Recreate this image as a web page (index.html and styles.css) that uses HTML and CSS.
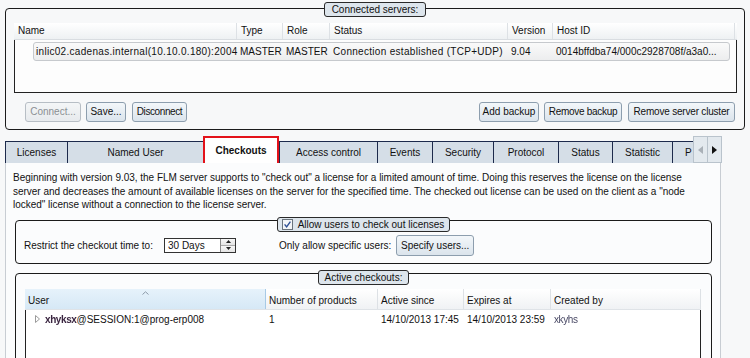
FILE: index.html
```html
<!DOCTYPE html>
<html>
<head>
<meta charset="utf-8">
<link rel="stylesheet" href="styles.css">
</head>
<body>
<section class="group servers">
  <div class="group-title title-servers">Connected servers:</div>
  <div class="srv-table">
    <div class="srv-head">
      <div class="th">Name</div>
      <div class="th">Type</div>
      <div class="th">Role</div>
      <div class="th">Status</div>
      <div class="th">Version</div>
      <div class="th">Host ID</div>
    </div>
    <div class="srv-body">
      <div class="srv-row">
        <div class="td td-wide">inlic02.cadenas.internal(10.10.0.180):2004</div>
        <div class="td">MASTER</div>
        <div class="td">MASTER</div>
        <div class="td td-wide">Connection established (TCP+UDP)</div>
        <div class="td">9.04</div>
        <div class="td">0014bffdba74/000c2928708f/a3a0...</div>
      </div>
    </div>
  </div>
  <div class="btn-row">
    <div class="btn-group">
      <div class="btn disabled b-connect">Connect...</div>
      <div class="btn b-save">Save...</div>
      <div class="btn b-disconnect">Disconnect</div>
    </div>
    <div class="btn-group btn-group-right">
      <div class="btn b-add">Add backup</div>
      <div class="btn b-remove">Remove backup</div>
      <div class="btn b-cluster">Remove server cluster</div>
    </div>
  </div>
</section>

<nav class="tabbar">
  <div class="tab w-licenses">Licenses</div>
  <div class="tab w-named">Named User</div>
  <div class="tab active w-checkouts">Checkouts</div>
  <div class="tab w-access">Access control</div>
  <div class="tab w-events">Events</div>
  <div class="tab w-security">Security</div>
  <div class="tab w-protocol">Protocol</div>
  <div class="tab w-status">Status</div>
  <div class="tab w-statistic">Statistic</div>
  <div class="tab w-partial"><span class="partial-label">P</span></div>
  <div class="scroll-btn">
    <svg width="5" height="8" viewBox="0 0 5 8"><path d="M5 0 L0 4 L5 8 Z" fill="#a9b0b7"/></svg>
  </div>
  <div class="scroll-btn">
    <svg width="5" height="8" viewBox="0 0 5 8"><path d="M0 0 L5 4 L0 8 Z" fill="#111"/></svg>
  </div>
</nav>

<main class="pane">
  <p class="intro">Beginning with version 9.03, the FLM server supports to "check out" a license for a limited amount of time. Doing this reserves the license on the license<br>server and decreases the amount of available licenses on the server for the specified time. The checked out license can be used on the client as a "node<br>locked" license without a connection to the license server.</p>

  <section class="group opts">
    <div class="group-title title-opts">
      <svg class="check" width="11" height="11" viewBox="0 0 11 11"><rect x="0.5" y="0.5" width="10" height="10" fill="#f3f5f7" stroke="#6a737c"/><path d="M2.6 5.4 L4.6 7.9 L8.4 2.6" fill="none" stroke="#2d4f94" stroke-width="1.4"/></svg>
      Allow users to check out licenses
    </div>
    <label class="lbl lbl-restrict">Restrict the checkout time to:</label>
    <div class="spin">
      <span class="spin-val">30 Days</span>
      <span class="spin-btns">
        <span class="spin-b"><svg width="5" height="3" viewBox="0 0 5 3"><path d="M0 3 L2.5 0 L5 3 Z" fill="#222"/></svg></span>
        <span class="spin-b"><svg width="5" height="3" viewBox="0 0 5 3"><path d="M0 0 L2.5 3 L5 0 Z" fill="#222"/></svg></span>
      </span>
    </div>
    <label class="lbl lbl-only">Only allow specific users:</label>
    <div class="btn btn-specify">Specify users...</div>
  </section>

  <section class="group checkouts">
    <div class="group-title title-checkouts">Active checkouts:</div>
    <div class="co-table">
      <div class="co-head">
        <div class="th th-sorted">
          <svg class="sort" width="7" height="4" viewBox="0 0 7 4"><path d="M0.5 3.5 L3.5 0.8 L6.5 3.5" fill="none" stroke="#8c9aa8" stroke-width="1"/></svg>
          User
        </div>
        <div class="th">Number of products</div>
        <div class="th">Active since</div>
        <div class="th">Expires at</div>
        <div class="th">Created by</div>
      </div>
      <div class="co-body">
        <div class="co-row">
          <div class="td td-user">
            <svg class="expander" width="5" height="8" viewBox="0 0 5 8"><path d="M0.5 0.5 L4.5 4 L0.5 7.5 Z" fill="none" stroke="#9a9a9a"/></svg>
            <span class="blur blur-user">xhyksx</span>@SESSION:1@prog-erp008
          </div>
          <div class="td">1</div>
          <div class="td">14/10/2013 17:45</div>
          <div class="td">14/10/2013 23:59</div>
          <div class="td"><span class="blur blur-created">xkyhs</span></div>
        </div>
      </div>
    </div>
  </section>
</main>
</body>
</html>
```

FILE: styles.css
```css
* { box-sizing: border-box; }
html, body { margin: 0; padding: 0; }
body {
  width: 750px;
  height: 358px;
  overflow: hidden;
  background: #f7f8f9;
  font-family: "Liberation Sans", Arial, sans-serif;
  font-size: 10px;
  color: #111;
}

/* group boxes */
.group {
  position: relative;
  border: 1px solid #1b1b1b;
  border-radius: 4px;
}
.group-title {
  position: absolute;
  left: 0;
  right: 0;
  margin: 0 auto;
  width: max-content;
  height: 15px;
  padding: 0 6px;
  line-height: 13px;
  background: #dde5ec;
  border: 1px solid #2a2a2a;
  border-radius: 3px;
  white-space: nowrap;
  display: flex;
  align-items: center;
  gap: 5px;
}
.title-servers { top: -7px; padding: 0 7px; }
.title-opts { top: -4px; padding-left: 4px; padding-right: 5px; }
.title-checkouts { top: -4px; }

/* connected servers */
.servers {
  margin: 8px 5px 0 5px;
  padding: 14px 7px 7px 8px;
}
.srv-head {
  display: grid;
  grid-template-columns: 223px 46px 47px 178px 45px 182px;
  height: 17px;
  background: linear-gradient(#ffffff, #eef1f3);
  border-bottom: 1px solid #d9dde1;
}
.th {
  padding-left: 4px;
  line-height: 16px;
  border-right: 1px solid #dde1e5;
  white-space: nowrap;
  overflow: hidden;
}
.srv-body {
  height: 53px;
  border: 1px solid #222;
  border-top: none;
  padding: 2px 6px 0 18px;
  background: #fdfdfd;
}
.srv-row {
  display: grid;
  grid-template-columns: 204px 46px 47px 178px 45px 1fr;
  height: 19px;
  border: 1px solid #c6c9cd;
  border-radius: 3px;
  background: linear-gradient(#fafafa, #ecedee);
}
.td {
  padding-left: 2px;
  line-height: 18px;
  white-space: nowrap;
  overflow: hidden;
}
.td-wide { letter-spacing: 0.3px; }

.btn-row {
  display: flex;
  justify-content: space-between;
  margin-top: 9px;
  padding: 0 2px 0 11px;
}
.btn-group { display: flex; gap: 5px; }
.btn-group-right { gap: 5px; }
.btn {
  height: 20px;
  padding: 0 2px;
  border: 1px solid #8d9eae;
  border-radius: 3px;
  background: linear-gradient(#f3f7fa, #dbe4ec);
  line-height: 18px;
  white-space: nowrap;
  text-align: center;
  flex: none;
}
.btn.disabled {
  color: #8b8f93;
  border-color: #b7bec5;
  background: linear-gradient(#f4f6f7, #e7eaed);
}
.b-connect { width: 56px; }
.b-save { width: 40px; }
.b-disconnect { width: 55px; margin-left: 1px; letter-spacing: -0.4px; }
.b-add { width: 60px; }
.b-remove { width: 78px; letter-spacing: -0.3px; }
.b-cluster { width: 107px; margin-left: 1px; letter-spacing: -0.2px; }

/* tabs */
.tabbar {
  display: flex;
  align-items: flex-end;
  margin: 6px 0 0 5px;
  height: 27px;
}
.tab {
  height: 22px;
  border: 1px solid #1d2a4c;
  border-bottom: none;
  border-right: none;
  background: #d5dee7;
  text-align: center;
  line-height: 22px;
  white-space: nowrap;
  overflow: hidden;
  flex: none;
}
.tab.active {
  height: 27px;
  background: #ffffff;
  border: 2px solid #e3121a;
  border-bottom: none;
  font-weight: bold;
  line-height: 25px;
}
.w-licenses { width: 62px; }
.w-named { width: 136px; }
.w-checkouts { width: 76px; }
.w-access { width: 98px; }
.w-events { width: 55px; }
.w-security { width: 61px; }
.w-protocol { width: 65px; }
.w-status { width: 54px; }
.w-statistic { width: 60px; }
.w-partial { width: 21px; text-align: left; }
.partial-label { padding-left: 12px; }
.scroll-btn {
  flex: none;
  width: 15px;
  height: 27px;
  border: 1px solid #b9c3cc;
  background: #e3e9ee;
  display: flex;
  align-items: center;
  justify-content: center;
}
.scroll-btn + .scroll-btn { width: 14px; border-left: none; }

/* pane */
.pane {
  margin-left: 5px;
  width: 716px;
  height: 195px;
  border-left: 1px solid #c8cdd3;
  border-right: 1px solid #c8cdd3;
  background: #fbfcfd;
  padding: 8px 8px 0 7px;
  overflow: hidden;
}
.intro {
  margin: 0;
  line-height: 13.5px;
  white-space: nowrap;
  letter-spacing: -0.02px;
}

.opts {
  margin: 8px 0 0 2px;
  height: 44px;
  padding: 14px 8px 0 8px;
  display: flex;
  align-items: flex-start;
}
.lbl {
  line-height: 21px;
  white-space: nowrap;
}
.lbl-restrict { width: 140px; }
.lbl-only { width: 117px; margin-left: 43px; }
.spin {
  margin-top: 3px;
  width: 72px;
  height: 15px;
  border: 1px solid #333;
  background: #fff;
  display: flex;
}
.spin-val { flex: 1; padding-left: 3px; line-height: 13px; }
.spin-btns {
  width: 15px;
  display: flex;
  flex-direction: column;
  border-left: 1px solid #888;
}
.spin-b {
  flex: 1;
  display: flex;
  align-items: center;
  justify-content: center;
  background: linear-gradient(#f7f7f7, #e4e4e4);
}
.spin-b + .spin-b { border-top: 1px solid #aaa; }
.btn-specify { height: 21px; line-height: 19px; padding: 0 4px; }

.checkouts {
  margin: 9px 0 0 2px;
  height: 140px;
  padding: 15px 10px 0 9px;
}
.co-head {
  display: grid;
  grid-template-columns: 241px 112px 86px 87px 1fr;
  height: 21px;
  background: linear-gradient(#ffffff, #f0f2f4);
  border-bottom: 1px solid #dfe3e7;
}
.co-head .th { padding-top: 4px; line-height: 16px; padding-left: 3px; }
.th-sorted {
  position: relative;
  background: linear-gradient(#e6f2fb, #d6e8f6);
  border-right: 1px solid #a7cae6;
}
.sort {
  position: absolute;
  left: 117px;
  top: 2px;
}
.co-body {
  height: 120px;
  border: 1px solid #222;
  border-top: none;
  background: #ffffff;
  padding-top: 1px;
}
.co-row {
  display: grid;
  grid-template-columns: 240px 112px 86px 87px 1fr;
}
.co-row .td { padding-left: 3px; line-height: 17px; }
.co-row .td-user {
  padding-left: 9px;
  display: flex;
  align-items: center;
}
.expander { margin-right: 5px; }
.blur {
  filter: blur(0.6px);
  color: #3a2540;
  letter-spacing: -0.4px;
  font-weight: bold;
}
.blur-created { color: #4a4a66; font-weight: normal; }
```
